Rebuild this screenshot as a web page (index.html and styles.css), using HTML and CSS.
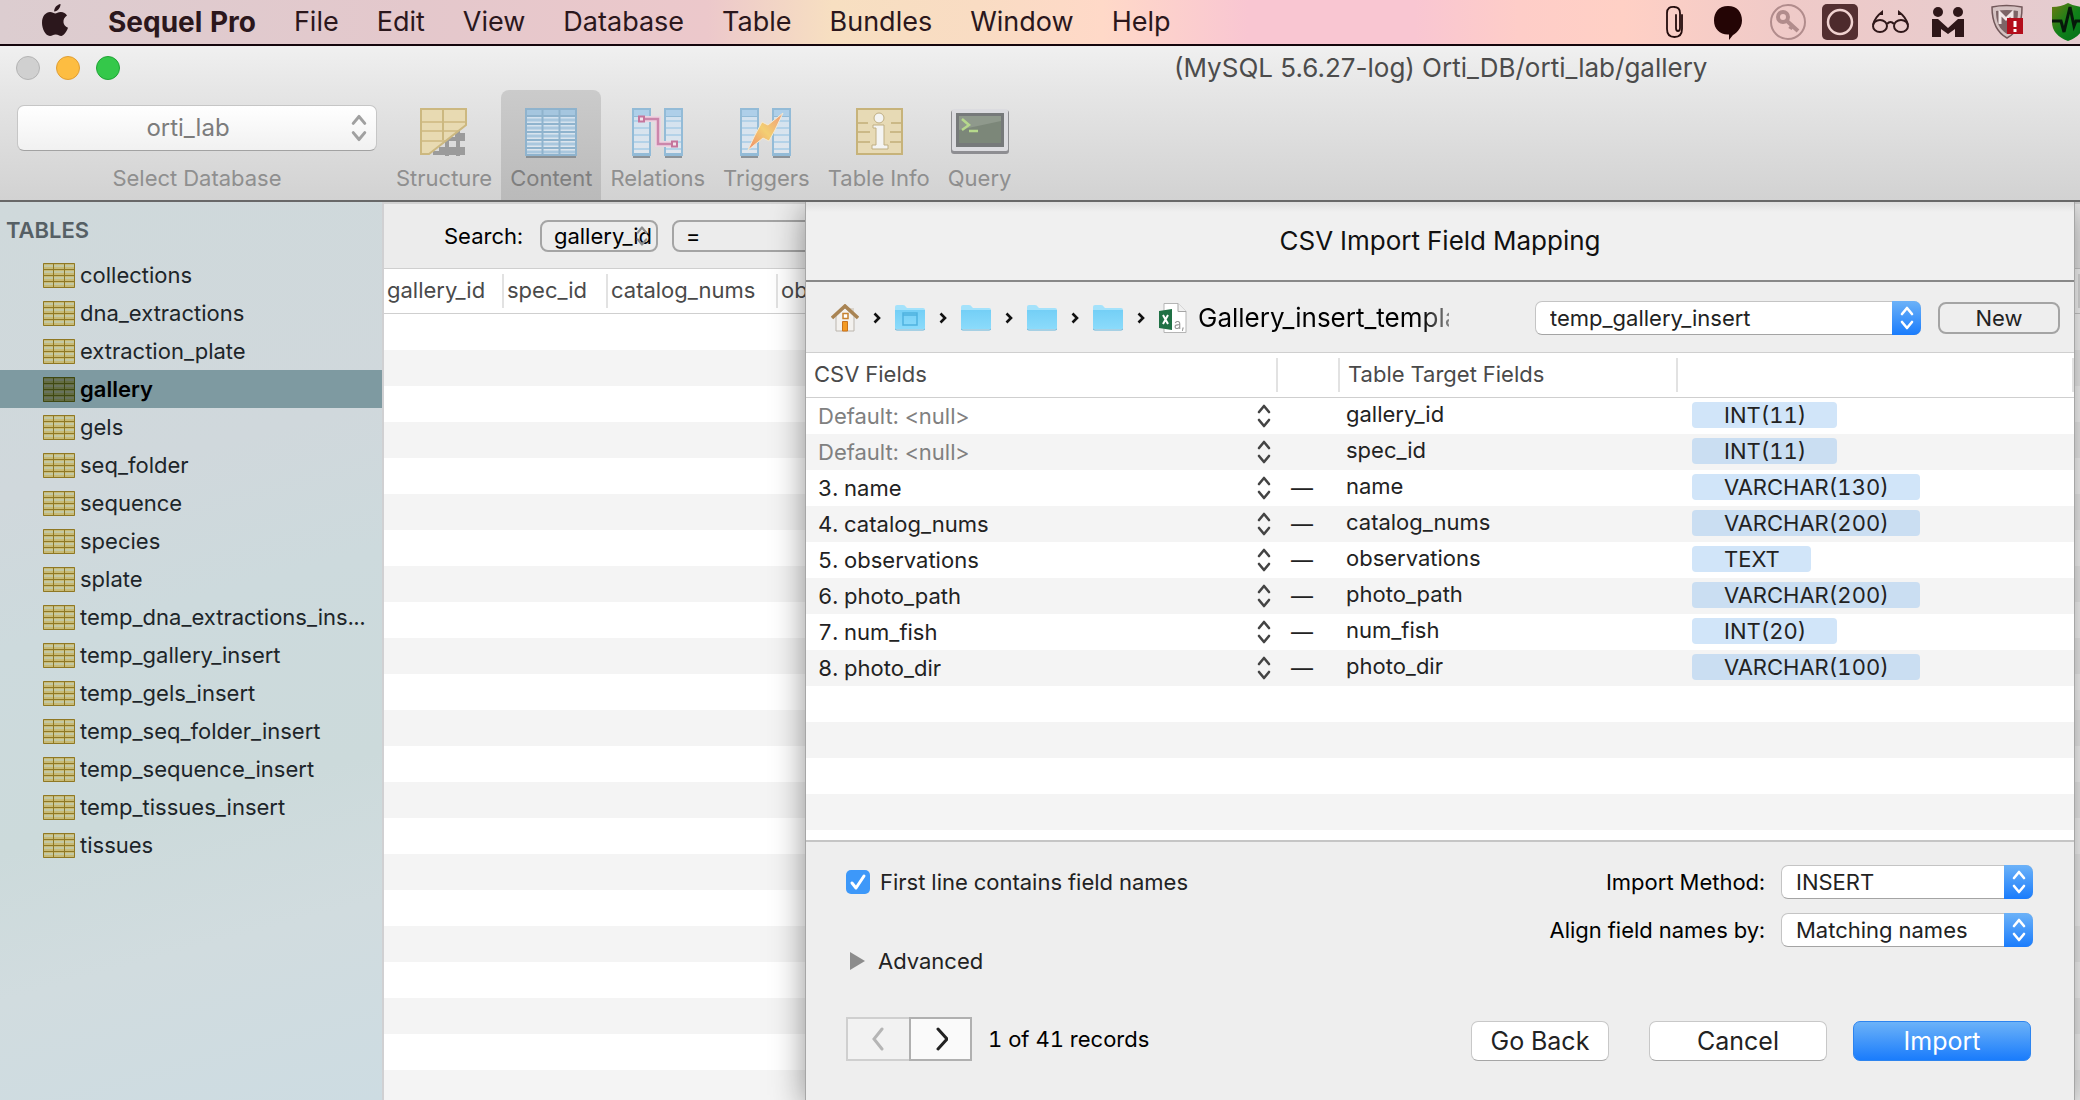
FILE: index.html
```html
<!DOCTYPE html>
<html lang="en">
<head>
<meta charset="utf-8">
<title>Sequel Pro – gallery</title>
<link rel="stylesheet" href="styles.css">
</head>
<body>
<svg class="defs" aria-hidden="true">
  <defs>
    <linearGradient id="folder-fill" x1="0" y1="0" x2="0" y2="1"><stop offset="0" stop-color="#74cff6"/><stop offset="1" stop-color="#8bdbfb"/></linearGradient>
    <linearGradient id="shield-fill" x1="0" y1="0" x2="1" y2="1"><stop offset="0" stop-color="#6b7a10"/><stop offset=".5" stop-color="#11801a"/><stop offset="1" stop-color="#00701a"/></linearGradient>
    <linearGradient id="blue-table" x1="0" y1="0" x2="0" y2="1"><stop offset="0" stop-color="#d3e2ef"/><stop offset="1" stop-color="#e0e6ed"/></linearGradient>
    <linearGradient id="bolt" x1="1" y1="0" x2="0" y2="1"><stop offset="0" stop-color="#f09a78"/><stop offset=".5" stop-color="#f3cf73"/><stop offset="1" stop-color="#f08a68"/></linearGradient>
  </defs>
  <symbol id="arrows" viewBox="0 0 14 26"><path d="M2 9 7 3l5 6M2 17l5 6 5-6" fill="none" stroke="currentColor" stroke-width="2.600" stroke-linecap="round" stroke-linejoin="round"/></symbol>
  <symbol id="table" viewBox="0 0 32 25">
    <path fill="#c8ba75" d="M0 0h32v25H0z"/>
    <path d="M1 3h30M1 9h30M1 15h30M1 21h30" stroke="#c3c8a4" stroke-width="2"/>
    <path d="M.5.5h31v24H.5zM10.500 0v25M21.500 0v25M0 6.500h32M0 12.500h32M0 18.500h32" fill="none" stroke="#8f7824"/>
  </symbol>
  <symbol id="chev" viewBox="0 0 8 12"><path d="M1.500 1.500 6 6 1.500 10.500" fill="none" stroke="#111" stroke-width="2.600"/></symbol>
  <symbol id="folder" viewBox="0 0 30 26">
    <path d="M0 2q0-2 2-2h6q2 0 3 2l1 1h16q2 0 2 2v19H0z" fill="#a4e2fb"/>
    <path d="M0 5h30v17q0 2-2 2H2q-2 0-2-2z" fill="url(#folder-fill)"/>
    <path d="M0 23.500q0 1.500 2 1.500h26q2 0 2-1.500" fill="none" stroke="#5eb2da"/>
  </symbol>
  <symbol id="blue-col" viewBox="0 0 19 50">
    <path d="M1 3h17v47H1z" fill="#8b9298"/>
    <path d="M0 0h19v48H0z" fill="#93bbd7"/>
    <path d="M2 2h15v6H2z" fill="#aecfe9"/>
    <path d="M2 9h15v36H2z" fill="url(#blue-table)"/>
    <path d="M2 13h15M2 20h15M2 27h15M2 34h15M2 41h15" stroke="#b4d2e8" stroke-width="2"/>
  </symbol>
</svg>

<nav class="menubar" aria-label="Menu bar">
  <svg class="apple" viewBox="0 0 26 32" aria-label="Apple"><path fill="#2b171c" d="M18.500 0c.3 3.500-2.800 7.500-6.300 7.400C11.900 4 15 .5 18.500 0zM13.300 9.600c1.200 0 3-1.600 5.600-1.500 2.600.1 4.800 1.300 6.100 3.300-5.300 3.400-4.400 10.200 1 12.400-.8 2.300-3.500 7.900-6.600 8.100-2.200.1-3-1.400-5.700-1.400s-3.600 1.400-5.700 1.400C3.300 31.900 0 24.300 0 18.700c0-6.700 4-10.500 8-10.600 2.400 0 4.200 1.500 5.300 1.500z"/></svg>
  <ul class="menus">
    <li><a class="app" href="#">Sequel Pro</a></li><li><a href="#">File</a></li><li><a href="#">Edit</a></li><li><a href="#">View</a></li><li><a href="#">Database</a></li><li><a href="#">Table</a></li><li><a href="#">Bundles</a></li><li><a href="#">Window</a></li><li><a href="#">Help</a></li>
  </ul>
  <div class="status">
    <svg width="44" height="44" viewBox="0 0 44 44"><path d="M20 15v13q0 3 2 3t2-3V13q0-6-6-6h1q-8-1-8 6v16q0 8 7.500 8t7.500-8V15" fill="none" stroke="#240c0c" stroke-width="1.800" stroke-linecap="round"/></svg>
    <svg width="60" height="44" viewBox="0 0 60 44"><path d="M28 6c9 0 14 6 14 14.500S35 34 33 35l-4 5v-5.500C20 35 14 29 14 20.500S19 6 28 6z" fill="#240505"/></svg>
    <svg width="54" height="44" viewBox="0 0 54 44"><g fill="none" stroke="#b18c8c"><circle cx="28" cy="22" r="17" stroke-width="2"/><circle cx="23" cy="17" r="5" stroke-width="4"/><path d="m27 21 11 10M32 26l-2 3" stroke-width="4"/></g></svg>
    <svg width="52" height="44" viewBox="0 0 52 44"><rect x="8" y="4" width="36" height="36" rx="5" fill="#542f31"/><circle cx="26" cy="22" r="12" fill="#4d2a2c" stroke="#f0d2d0" stroke-width="2.500"/></svg>
    <svg width="54" height="44" viewBox="0 0 54 44"><g fill="none" stroke="#2f1719" stroke-width="2"><ellipse cx="14" cy="26" rx="7" ry="6"/><ellipse cx="35" cy="26" rx="7" ry="6"/><path d="M21 24q3.500-4 7 0M7 25q2-8 9-13v3M42 25q-2-8-9-13v3"/></g></svg>
    <svg width="60" height="44" viewBox="0 0 60 44"><g fill="#2f1719"><circle cx="18" cy="12" r="5"/><circle cx="38" cy="12" r="5"/><path d="M12 37V19h6l10 9 10-9h6v18h-9v-8l-7 5-7-5v8z"/></g></svg>
    <svg width="60" height="44" viewBox="0 0 60 44"><path d="M12 7q14-3 30 0c0 16-4 25-15 31C16 32 12 22 12 7z" fill="#d5c2c2" stroke="#72585a" stroke-width="1.500"/><path d="M16 11q11-2 22 0c0 12-3 18-11 23-8-5-11-12-11-23z" fill="#7d6466"/><path d="M20 24V13l6 6 6-6v11" fill="none" stroke="#f1e5e5" stroke-width="3"/><path d="M27 18h16v16H27z" fill="#b40e1c"/><path d="M35 21v6M35 29v3" stroke="#fff" stroke-width="3"/></svg>
    <svg width="40" height="44" viewBox="0 0 40 44"><path d="M12 7q9 0 16-4 7 4 16 4v15q0 13-16 19-16-6-16-19z" fill="url(#shield-fill)"/><path d="M12 21h9l3 11 6-25 4 19 2-5h8" fill="none" stroke="#06180a" stroke-width="3"/></svg>
  </div>
</nav>

<div class="window">
  <header class="titlebar">
    <div class="lights"><button class="light" aria-label="Close"></button><button class="light amber" aria-label="Minimise"></button><button class="light green" aria-label="Zoom"></button></div>
    <h1>(MySQL 5.6.27-log) Orti_DB/orti_lab/gallery</h1>
  </header>
  <div class="toolbar">
    <div class="db">
      <div class="popup db-popup"><select id="db"><option>orti_lab</option></select><svg class="arrows"><use href="#arrows"/></svg></div>
      <label for="db">Select Database</label>
    </div>
    <button class="tool">
      <svg width="58" height="50" viewBox="0 0 58 50"><path d="M18 45h32M31 31h19M24 41h26M43 20v28M32 30v18M40 27h10" stroke="#9b9b9b" stroke-width="4"/><path d="M6 1h45v16L14 46H6z" fill="#e8dab2"/><path d="M6 14h45M6 23h38M6 33h24" stroke="#d4c08c" stroke-width="2"/><path d="M6 1h45v16L14 46H6zM28 1v31" fill="none" stroke="#ccb880" stroke-width="2"/></svg>
      <span>Structure</span></button>
    <button class="tool selected" aria-pressed="true">
      <svg width="58" height="50" viewBox="0 0 58 50"><path d="M4 3h50v47H4z" fill="#8a8f93"/><path d="M3 0h52v48H3z" fill="#8fb3cd"/><path d="M5 2h48v5H5z" fill="#a5c6df"/><path d="M5 8h48v38H5z" fill="url(#blue-table)"/><path d="M5 12h48M5 20h48M5 28h48M5 36h48M5 44h48" stroke="#a9c7de" stroke-width="3"/><path d="M20.500 1v46M37.500 1v46M4 16h50M4 24h50M4 32h50M4 40h50M4 8h50" stroke="#8fb3cd" stroke-width="2"/></svg>
      <span>Content</span></button>
    <button class="tool">
      <svg width="58" height="50" viewBox="0 0 58 50"><use href="#blue-col" x="3" width="19" height="50"/><use href="#blue-col" x="35" width="19" height="50"/><path d="M12 11h17v25h17" fill="none" stroke="#ecd3e1" stroke-width="6"/><path d="M12 11h17v25h17" fill="none" stroke="#cb86ab" stroke-width="2.500"/><path d="M10 8.500h5v5h-5zM43 33.500h5v5h-5z" fill="#f1e2ea" stroke="#c5759d" stroke-width="2"/></svg>
      <span>Relations</span></button>
    <button class="tool">
      <svg width="58" height="50" viewBox="0 0 58 50"><use href="#blue-col" x="3" width="19" height="50"/><use href="#blue-col" x="35" width="19" height="50"/><path d="M46 5 31 17l-6-3-7 13-7 15 15-12 6 3 6-11z" fill="url(#bolt)" stroke="#f4ead2"/></svg>
      <span>Triggers</span></button>
    <button class="tool">
      <svg width="58" height="50" viewBox="0 0 58 50"><path d="M7 1h45v45H7z" fill="#e7dab5" stroke="#c7b37a" stroke-width="2"/><path d="M8 15h10M41 15h10M8 24h12M40 24h11M8 34h12M40 34h11" stroke="#cbb987" stroke-width="2"/><path d="M23 20v-3h11v20h4v4H22v-4h4V20z" fill="#f4f4f2" stroke="#bfae82"/><circle cx="29" cy="10" r="5" fill="#f4f4f2" stroke="#bfae82"/></svg>
      <span>Table Info</span></button>
    <button class="tool">
      <svg width="58" height="50" viewBox="0 0 58 50"><rect x="0" y="2" width="58" height="44" rx="3" fill="#8e8e92"/><rect x="1" y="1" width="56" height="42" rx="2" fill="#dcdce0"/><path d="M5 5h48v34H5z" fill="#76797a"/><path d="M8 8h42v27H8z" fill="#7c8779"/><path d="M8 8h42v5L8 22z" fill="#8f998c"/><path d="m11 11 7 6-7 5M18 23h9" fill="none" stroke="#b6d98c" stroke-width="2.500"/></svg>
      <span>Query</span></button>
  </div>

  <div class="body">
    <aside class="sidebar">
      <h2>TABLES</h2>
      <ul>
        <li><a href="#"><svg><use href="#table"/></svg><span>collections</span></a></li>
        <li><a href="#"><svg><use href="#table"/></svg><span>dna_extractions</span></a></li>
        <li><a href="#"><svg><use href="#table"/></svg><span>extraction_plate</span></a></li>
        <li><a class="current" href="#" aria-current="page"><svg><use href="#table"/></svg><span>gallery</span></a></li>
        <li><a href="#"><svg><use href="#table"/></svg><span>gels</span></a></li>
        <li><a href="#"><svg><use href="#table"/></svg><span>seq_folder</span></a></li>
        <li><a href="#"><svg><use href="#table"/></svg><span>sequence</span></a></li>
        <li><a href="#"><svg><use href="#table"/></svg><span>species</span></a></li>
        <li><a href="#"><svg><use href="#table"/></svg><span>splate</span></a></li>
        <li><a href="#"><svg><use href="#table"/></svg><span>temp_dna_extractions_ins...</span></a></li>
        <li><a href="#"><svg><use href="#table"/></svg><span>temp_gallery_insert</span></a></li>
        <li><a href="#"><svg><use href="#table"/></svg><span>temp_gels_insert</span></a></li>
        <li><a href="#"><svg><use href="#table"/></svg><span>temp_seq_folder_insert</span></a></li>
        <li><a href="#"><svg><use href="#table"/></svg><span>temp_sequence_insert</span></a></li>
        <li><a href="#"><svg><use href="#table"/></svg><span>temp_tissues_insert</span></a></li>
        <li><a href="#"><svg><use href="#table"/></svg><span>tissues</span></a></li>
      </ul>
    </aside>

    <main class="content">
      <div class="search">
        <label for="field">Search:</label>
        <div class="popup outline field"><select id="field"><option>gallery_id</option></select><svg class="arrows"><use href="#arrows"/></svg></div>
        <div class="popup outline operator"><select aria-label="Operator"><option>=</option></select></div>
      </div>
      <div class="grid">
        <table class="records">
          <colgroup><col class="c-id"><col class="c-spec"><col class="c-cat"><col></colgroup>
          <thead><tr><th><span>gallery_id</span></th><th><span>spec_id</span></th><th><span>catalog_nums</span></th><th><span>observations</span></th></tr></thead>
        </table>
      </div>
    </main>

    <section class="sheet" role="dialog" aria-labelledby="sheet-title">
      <h2 id="sheet-title">CSV Import Field Mapping</h2>
      <div class="source">
        <div class="path">
          <svg width="28" height="28" viewBox="0 0 28 28"><path d="M19 4h4v8h-4z" fill="#d9d4cc"/><path d="M5 12 14 4l9 8v15H5z" fill="#f3f1ee" stroke="#bbb5ad"/><path d="M1 14 14 2l13 12" fill="none" stroke="#a98453" stroke-width="3.500"/><path d="M12 9.500h5v5h-5z" fill="#fff" stroke="#c7822f" stroke-width="1.500"/><path d="M11.500 17.500h5V27h-5z" fill="#f39a22" stroke="#c9731c"/></svg>
          <svg class="chev"><use href="#chev"/></svg>
          <svg width="30" height="26" viewBox="0 0 30 26"><use href="#folder"/><path d="M8 8h14v12H8zM8 10h14" fill="none" stroke="#4fb2e0" stroke-width="1.500"/></svg>
          <svg class="chev"><use href="#chev"/></svg>
          <svg width="30" height="26"><use href="#folder"/></svg>
          <svg class="chev"><use href="#chev"/></svg>
          <svg width="30" height="26"><use href="#folder"/></svg>
          <svg class="chev"><use href="#chev"/></svg>
          <svg width="30" height="26"><use href="#folder"/></svg>
          <svg class="chev"><use href="#chev"/></svg>
          <svg class="xls" width="28" height="30" viewBox="0 0 28 30"><path d="M5 .5h14l8 8v21H5z" fill="#fff" stroke="#b5b5b5"/><path d="M19 .5v8h8" fill="#f0f0f0" stroke="#a5a5a5"/><path d="M0 8l13-2v21L0 25z" fill="#1f7145"/><path d="m4 12 5 9m0-9-5 9" stroke="#fff" stroke-width="2"/><text x="15" y="26" font-size="13" fill="#999">a,</text></svg>
          <span class="filename">Gallery_insert_templa</span>
        </div>
        <div class="popup blue target"><select aria-label="Target table"><option>temp_gallery_insert</option></select><span class="cap"><svg class="arrows"><use href="#arrows"/></svg></span></div>
        <button class="new">New</button>
      </div>

      <div class="mapping">
        <table>
          <colgroup><col class="m-csv"><col class="m-op"><col class="m-target"><col></colgroup>
          <thead><tr><th><span>CSV Fields</span></th><th><span></span></th><th><span>Table Target Fields</span></th><th><span></span></th></tr></thead>
          <tbody>
            <tr><td><div class="popup plain unset"><select aria-label="Source for gallery_id"><option>Default: &lt;null&gt;</option></select><svg class="arrows"><use href="#arrows"/></svg></div></td><td></td><td>gallery_id</td><td><span class="type">INT(11)</span></td></tr>
            <tr><td><div class="popup plain unset"><select aria-label="Source for spec_id"><option>Default: &lt;null&gt;</option></select><svg class="arrows"><use href="#arrows"/></svg></div></td><td></td><td>spec_id</td><td><span class="type">INT(11)</span></td></tr>
            <tr><td><div class="popup plain"><select aria-label="Source for name"><option>3. name</option></select><svg class="arrows"><use href="#arrows"/></svg></div></td><td>—</td><td>name</td><td><span class="type">VARCHAR(130)</span></td></tr>
            <tr><td><div class="popup plain"><select aria-label="Source for catalog_nums"><option>4. catalog_nums</option></select><svg class="arrows"><use href="#arrows"/></svg></div></td><td>—</td><td>catalog_nums</td><td><span class="type">VARCHAR(200)</span></td></tr>
            <tr><td><div class="popup plain"><select aria-label="Source for observations"><option>5. observations</option></select><svg class="arrows"><use href="#arrows"/></svg></div></td><td>—</td><td>observations</td><td><span class="type">TEXT</span></td></tr>
            <tr><td><div class="popup plain"><select aria-label="Source for photo_path"><option>6. photo_path</option></select><svg class="arrows"><use href="#arrows"/></svg></div></td><td>—</td><td>photo_path</td><td><span class="type">VARCHAR(200)</span></td></tr>
            <tr><td><div class="popup plain"><select aria-label="Source for num_fish"><option>7. num_fish</option></select><svg class="arrows"><use href="#arrows"/></svg></div></td><td>—</td><td>num_fish</td><td><span class="type">INT(20)</span></td></tr>
            <tr><td><div class="popup plain"><select aria-label="Source for photo_dir"><option>8. photo_dir</option></select><svg class="arrows"><use href="#arrows"/></svg></div></td><td>—</td><td>photo_dir</td><td><span class="type">VARCHAR(100)</span></td></tr>
          </tbody>
        </table>
      </div>

      <div class="options">
        <div class="left">
          <label class="check"><input type="checkbox" checked><svg viewBox="0 0 24 24"><path d="m6 13 4 5 8-12" fill="none" stroke="#fff" stroke-width="3" stroke-linecap="round" stroke-linejoin="round"/></svg>First line contains field names</label>
          <button class="advanced"><svg width="16" height="18" viewBox="0 0 16 18"><path d="M0 0v18l15-9z" fill="#8c8c8c"/></svg>Advanced</button>
        </div>
        <div class="form">
          <label for="method">Import Method:</label>
          <div class="popup blue"><select id="method"><option>INSERT</option></select><span class="cap"><svg class="arrows"><use href="#arrows"/></svg></span></div>
          <label for="align">Align field names by:</label>
          <div class="popup blue"><select id="align"><option>Matching names</option></select><span class="cap"><svg class="arrows"><use href="#arrows"/></svg></span></div>
        </div>
      </div>
      <div class="actions">
        <div class="pager">
          <button disabled aria-label="Previous record"><svg viewBox="0 0 14 24"><path d="M10 2 2 12l8 10" fill="none" stroke="#b5b5b5" stroke-width="3" stroke-linecap="round"/></svg></button><button aria-label="Next record"><svg viewBox="0 0 14 24"><path d="m4 2 9 10-9 10" fill="none" stroke="#222" stroke-width="3" stroke-linecap="round"/></svg></button>
          <span>1 of 41 records</span>
        </div>
        <button class="push back">Go Back</button>
        <button class="push">Cancel</button>
        <button class="push primary">Import</button>
      </div>
    </section>
  </div>
</div>
</body>
</html>
```
FILE: styles.css
```css
* { box-sizing: border-box; }
body {
  margin: 0;
  height: 100vh;
  display: flex;
  flex-direction: column;
  overflow: hidden;
  background: #ececec;
  color: #222;
  font: 22px/28px Inter, "Liberation Sans", sans-serif;
  font-variant-numeric: tabular-nums;
}
ul { list-style: none; margin: 0; padding: 0; }
a { color: inherit; text-decoration: none; }
button, select { font: inherit; font-variant-numeric: inherit; color: inherit; margin: 0; }
button { padding: 0; border: 0; background: none; }
svg { display: block; flex: none; }
.defs { position: absolute; width: 0; height: 0; }

/* Menu bar */
.menubar {
  flex: none;
  display: flex;
  align-items: center;
  height: 46px;
  padding-left: 42px;
  border-bottom: 2px solid #14050c;
  background: linear-gradient(90deg, #dccdd0 0%, #e4c8cc 20%, #ecc8cb 34%, #f7dfc1 40%, #f9dcc3 47%, #ffd9c8 53%, #f9c6d2 60%, #f9c6d2 68%, #fecdc8 73%, #ffd0c5 78%, #efcac8 86%, #e4ccd0 100%);
  color: #2b171c;
  font-size: 27px;
}
.apple { width: 26px; height: 32px; margin-bottom: 4px; }
.menus { display: flex; gap: 38px; margin-left: 40px; }
.app { font-size: 28px; font-weight: 700; }
.status { display: flex; margin-left: auto; }

/* Window frame */
.window { flex: 1; display: flex; flex-direction: column; min-height: 0; }
.titlebar {
  flex: none;
  display: flex;
  align-items: center;
  height: 44px;
  padding-left: 16px;
  background: linear-gradient(#f0f0f0, #e6e6e6);
}
.lights { display: flex; gap: 16px; width: 1158px; }
.light { width: 24px; height: 24px; border: 1px solid #b4b4b4; border-radius: 50%; background: #d0d0d0; }
.amber { border-color: #e09e34; background: #fdbd41; }
.green { border-color: #1fa435; background: #34c84a; }
h1 { margin: 0; font-size: 26px; font-weight: 400; font-variant-numeric: normal; color: #4c4c4c; white-space: nowrap; }
.toolbar {
  flex: none;
  display: flex;
  height: 112px;
  border-bottom: 2px solid #686868;
  background: linear-gradient(#e6e6e6, #d2d2d2);
  color: #8f8f8f;
}
.db { width: 360px; margin: 15px 10px 0 17px; text-align: center; }
.db label { display: block; margin-top: 13px; }
.tool {
  display: flex;
  flex-direction: column;
  align-items: center;
  gap: 6px;
  padding: 18px 9px 0;
  white-space: nowrap;
}
.selected { border-radius: 8px 8px 0 0; background: linear-gradient(#cbcbcb, #bababa); color: #7f7f7f; }

/* Pop-up buttons: the select and its arrows share one grid cell */
.popup { display: grid; grid-template-columns: 1fr auto; align-items: center; }
.popup select {
  grid-area: 1 / 1 / 2 / 3;
  width: 100%;
  height: 34px;
  padding: 0 14px;
  appearance: none;
  border: 0;
  border-radius: 7px;
  background: none;
  outline: none;
}
.popup > .arrows, .popup > .cap { grid-area: 1 / 2; pointer-events: none; }
.arrows { width: 14px; height: 26px; }
.db-popup select {
  height: 46px;
  padding: 0 18px 0 0;
  border: 1px solid #c6c6c6;
  border-bottom-color: #a2a2a2;
  background: linear-gradient(#fff, #f1f1f1);
  color: #7c7c7c;
  font-size: 24px;
  text-align: center;
  text-align-last: center;
}
.db-popup .arrows { width: 18px; height: 30px; margin-right: 9px; color: #a0a0a0; }
.outline select { height: 32px; padding: 0 0 0 12px; border: 2px solid #a4a4a4; border-radius: 8px; }
.outline .arrows { width: 12px; height: 22px; margin-right: 10px; color: #8d8d8d; }
.blue select { border: 1px solid #c4c4c4; border-bottom-color: #a4a4a4; background: #fff; }
.cap {
  display: grid;
  place-items: center;
  width: 29px;
  height: 34px;
  border-radius: 0 7px 7px 0;
  background: linear-gradient(#6cb2f8, #1a7cfc);
  color: #fff;
}
.plain select { height: 36px; padding: 0 0 0 12px; color: #222; }
.plain .arrows { margin-right: 7px; color: #444; }
.plain.unset select { color: #808080; }

/* Sidebar */
.body { position: relative; flex: 1; display: flex; min-height: 0; }
.sidebar {
  flex: none;
  width: 384px;
  border-right: 2px solid #d0d0d2;
  background: linear-gradient(165deg, #cfd9db 0%, #d0d8dc 30%, #cddadd 45%, #ccdadb 65%, #d1dcdf 80%, #cddce2 100%);
  color: #1d2529;
}
.sidebar h2 { margin: 14px 0 12px 6px; font-size: 22px; line-height: 28px; font-weight: 600; color: #566065; }
.sidebar a { display: flex; align-items: center; gap: 5px; height: 38px; padding-left: 43px; white-space: nowrap; }
.sidebar svg { width: 32px; height: 25px; }
.current { background: #7e9aa1; color: #000; font-weight: 600; }
.current svg { filter: hue-rotate(20deg) brightness(.56); }

/* Table content */
.content { flex: 1; display: flex; flex-direction: column; min-width: 0; }
.search {
  display: flex;
  align-items: center;
  height: 67px;
  padding-left: 60px;
  border-top: 2px solid #d2d2d2;
  border-bottom: 1px solid #cfcfcf;
  background: #ececec;
  color: #000;
}
.search label { margin-right: 17px; }
.field { width: 118px; margin-right: 14px; }
.operator { width: 240px; }
.grid, .mapping { flex: 1; min-height: 0; background: linear-gradient(#fff 50%, #f4f4f4 50%) 0 45px / 100% 72px; }
table { width: 100%; table-layout: fixed; border-collapse: separate; border-spacing: 0; }
th { height: 45px; padding: 0; border-bottom: 1px solid #cfcfcf; background: #fff; color: #4a4a4a; font-weight: 400; text-align: left; overflow: hidden; }
th span { display: block; height: 34px; padding-left: 3px; border-right: 2px solid #e2e2e2; line-height: 32px; white-space: nowrap; }
.c-id { width: 120px; }
.c-spec { width: 104px; }
.c-cat { width: 170px; }

/* Import sheet */
.sheet {
  position: absolute;
  top: 0;
  right: 6px;
  bottom: 0;
  left: 806px;
  display: flex;
  flex-direction: column;
  background: #eee;
  box-shadow: 0 0 0 1px #a6a6a6, 0 6px 32px rgba(0, 0, 0, .45);
  clip-path: inset(0 -60px 0 -60px);
}
.sheet > h2 {
  margin: 0;
  height: 80px;
  border-bottom: 2px solid #888;
  background: linear-gradient(#dedede, #f0f0f0 10px);
  color: #111;
  font-size: 26px;
  line-height: 78px;
  font-weight: 400;
  text-align: center;
}
.source { display: flex; align-items: center; height: 71px; padding: 2px 14px 0 25px; border-bottom: 1px solid #cfcfcf; }
.path { display: flex; align-items: center; gap: 14px; width: 618px; overflow: hidden; mask-image: linear-gradient(90deg, #000 590px, transparent 640px); }
.chev { width: 8px; height: 12px; }
.filename { margin-left: -3px; color: #000; font-size: 26px; }
.target { flex: 1; margin: 0 17px 0 86px; }
.new { width: 122px; height: 32px; border: 2px solid #a4a4a4; border-radius: 8px; }
.mapping { overflow: hidden; }
.mapping th span { padding-left: 8px; }
.m-csv { width: 472px; }
.m-op { width: 62px; }
.m-target { width: 338px; }
td { height: 36px; padding: 0; }
td:nth-child(2) { padding-left: 13px; }
td:nth-child(3) { padding: 0 0 4px 6px; }
td:nth-child(4) { padding: 0 0 2px 14px; }
.type { display: block; width: fit-content; height: 26px; padding: 0 31px 0 32px; border-radius: 4px; background: #d1e5f9; line-height: 26px; }
tr:nth-child(even) .type { background: #cadef2; }
.options { display: flex; justify-content: space-between; padding: 23px 41px 0 40px; border-top: 2px solid #c5c5c5; }
.check { display: grid; grid-template-columns: 24px auto; gap: 10px; align-items: center; height: 34px; }
.check input { grid-area: 1 / 1; width: 24px; height: 24px; margin: 0; appearance: none; border-radius: 5px; background: #3d98f9; }
.check svg { grid-area: 1 / 1; width: 24px; height: 24px; pointer-events: none; }
.advanced { display: flex; align-items: center; gap: 12px; margin: 48px 0 0 4px; }
.form { display: grid; grid-template-columns: auto 252px; column-gap: 16px; row-gap: 14px; align-items: center; height: 82px; color: #000; }
.form label { text-align: right; }
.form select { color: #222; }
.actions { display: flex; align-items: flex-end; padding: 42px 43px 39px 40px; font-size: 25px; }
.pager { display: flex; align-items: center; margin-right: auto; font-size: 22px; color: #000; }
.pager button { display: grid; place-items: center; width: 63px; height: 44px; border: 2px solid #b0b0b0; background: #fafafa; }
.pager button:disabled { border-color: #cfcfcf; border-right: 0; background: #f2f2f2; }
.pager svg { width: 14px; height: 24px; }
.pager span { margin-left: 16px; }
.push { width: 178px; height: 40px; margin-left: 26px; border: 1px solid #c8c8c8; border-bottom-color: #a6a6a6; border-radius: 7px; background: #fff; }
.back { width: 138px; margin-right: 14px; }
.primary { border-color: #2d84ef; background: linear-gradient(#6cb2f8, #1a7cfc); color: #fff; }
```
